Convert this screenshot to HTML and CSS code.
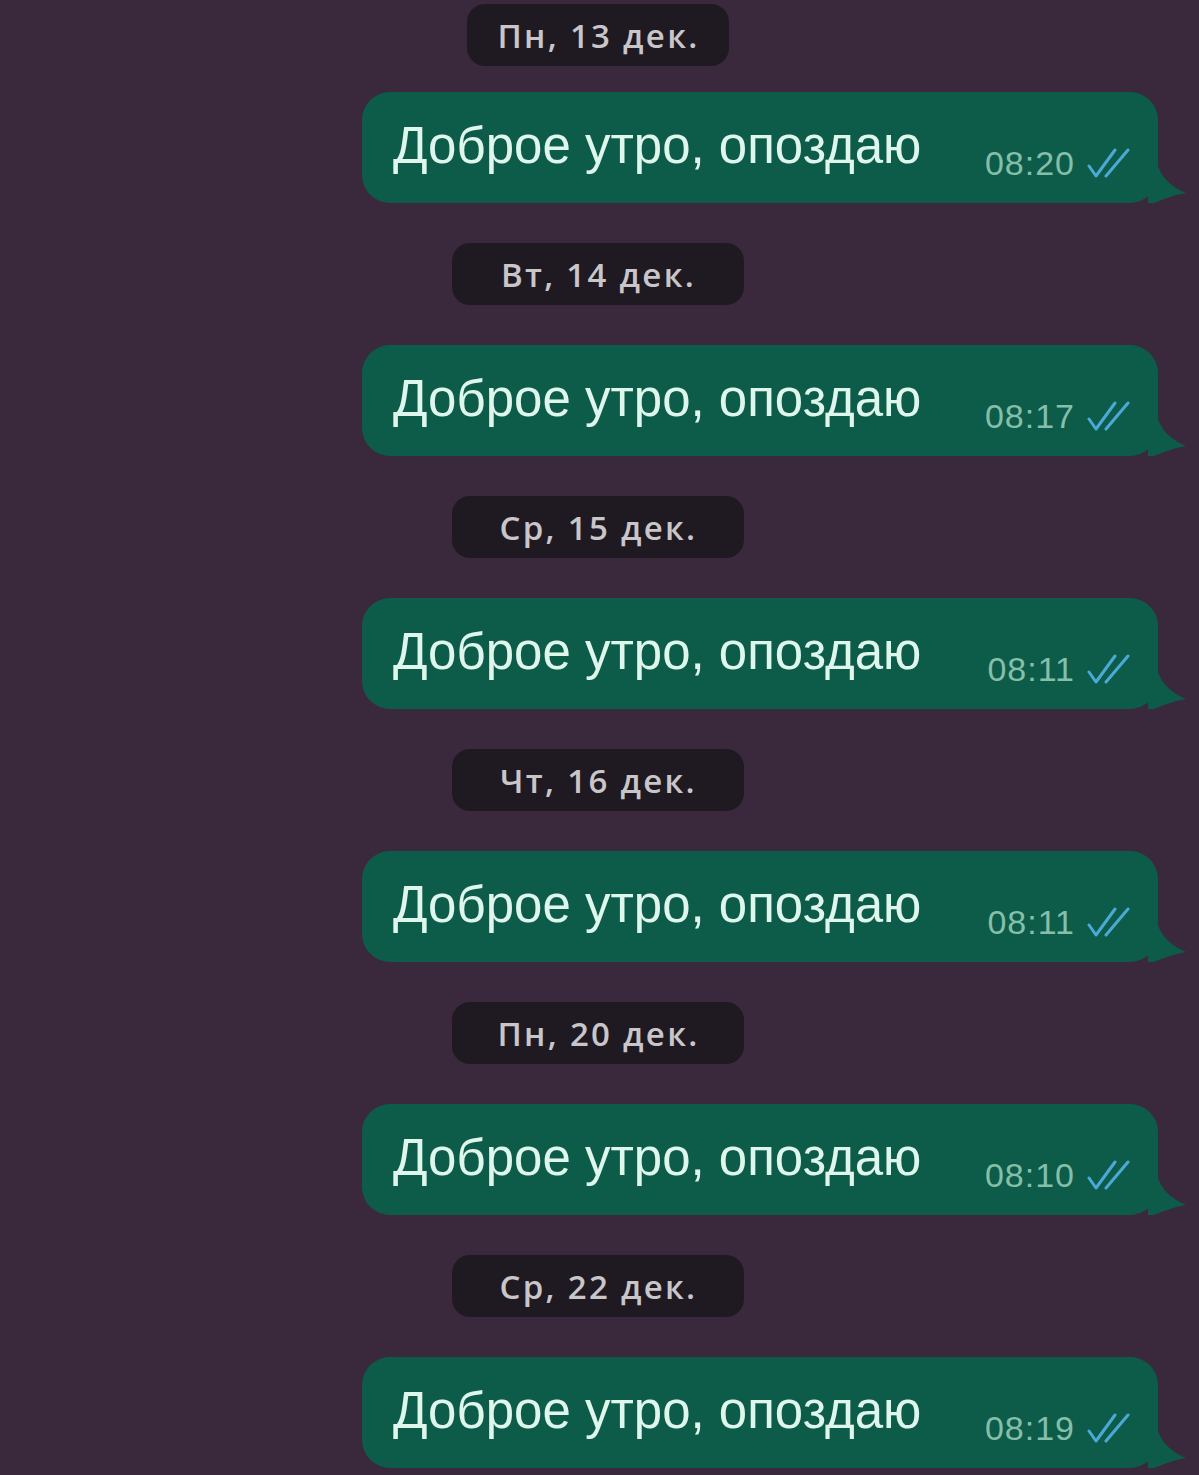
FILE: index.html
```html
<!DOCTYPE html>
<html lang="ru">
<head>
  <meta charset="UTF-8" />
  <meta name="viewport" content="width=device-width, initial-scale=1.0"/>
  <title>Чат</title>
  <link rel="stylesheet" href="styles.css">
</head>
<body>

  <div class="chat">

    <div class="date date--first">Пн, 13 дек.</div>
    <div class="bubble">
      <span class="text">Доброе утро, опоздаю</span>
      <span class="meta">
        <span class="time">08:20</span>
        <svg class="ticks" viewBox="0 0 44 31"><path d="M2 18 L9 28 L28 2 M19 28 L41 2"/></svg>
      </span>
      <svg class="tail" viewBox="0 0 40 70"><path d="M0 0 L6 0 C6 30 10 48 38 60 C26 62 16 66 6 70 L0 70 Z"/></svg>
    </div>

    <div class="date">Вт, 14 дек.</div>
    <div class="bubble">
      <span class="text">Доброе утро, опоздаю</span>
      <span class="meta">
        <span class="time">08:17</span>
        <svg class="ticks" viewBox="0 0 44 31"><path d="M2 18 L9 28 L28 2 M19 28 L41 2"/></svg>
      </span>
      <svg class="tail" viewBox="0 0 40 70"><path d="M0 0 L6 0 C6 30 10 48 38 60 C26 62 16 66 6 70 L0 70 Z"/></svg>
    </div>

    <div class="date">Ср, 15 дек.</div>
    <div class="bubble">
      <span class="text">Доброе утро, опоздаю</span>
      <span class="meta">
        <span class="time">08:11</span>
        <svg class="ticks" viewBox="0 0 44 31"><path d="M2 18 L9 28 L28 2 M19 28 L41 2"/></svg>
      </span>
      <svg class="tail" viewBox="0 0 40 70"><path d="M0 0 L6 0 C6 30 10 48 38 60 C26 62 16 66 6 70 L0 70 Z"/></svg>
    </div>

    <div class="date">Чт, 16 дек.</div>
    <div class="bubble">
      <span class="text">Доброе утро, опоздаю</span>
      <span class="meta">
        <span class="time">08:11</span>
        <svg class="ticks" viewBox="0 0 44 31"><path d="M2 18 L9 28 L28 2 M19 28 L41 2"/></svg>
      </span>
      <svg class="tail" viewBox="0 0 40 70"><path d="M0 0 L6 0 C6 30 10 48 38 60 C26 62 16 66 6 70 L0 70 Z"/></svg>
    </div>

    <div class="date">Пн, 20 дек.</div>
    <div class="bubble">
      <span class="text">Доброе утро, опоздаю</span>
      <span class="meta">
        <span class="time">08:10</span>
        <svg class="ticks" viewBox="0 0 44 31"><path d="M2 18 L9 28 L28 2 M19 28 L41 2"/></svg>
      </span>
      <svg class="tail" viewBox="0 0 40 70"><path d="M0 0 L6 0 C6 30 10 48 38 60 C26 62 16 66 6 70 L0 70 Z"/></svg>
    </div>

    <div class="date">Ср, 22 дек.</div>
    <div class="bubble">
      <span class="text">Доброе утро, опоздаю</span>
      <span class="meta">
        <span class="time">08:19</span>
        <svg class="ticks" viewBox="0 0 44 31"><path d="M2 18 L9 28 L28 2 M19 28 L41 2"/></svg>
      </span>
      <svg class="tail" viewBox="0 0 40 70"><path d="M0 0 L6 0 C6 30 10 48 38 60 C26 62 16 66 6 70 L0 70 Z"/></svg>
    </div>

  </div>

</body>
</html>
```

FILE: styles.css
```css
body {
  margin: 0;
  background: #3a293d;
  font-family: 'Liberation Sans', Arial, sans-serif;
  min-height: 1475px;
}

.chat {
  display: flex;
  flex-direction: column;
  align-items: center;
  padding-top: 4px;
}

.date {
  box-sizing: border-box;
  width: 292px;
  height: 62px;
  margin: 0 0 40px -4px;
  padding-left: 2px;
  background: #1f1a21;
  border-radius: 18px;
  color: #c9c6ca;
  font-family: 'Open Sans', 'Liberation Sans', sans-serif;
  font-size: 33px;
  font-weight: 600;
  letter-spacing: 2.3px;
  display: flex;
  align-items: center;
  justify-content: center;
}

.date--first {
  width: 262px;
  margin-bottom: 26px;
}

.bubble {
  position: relative;
  box-sizing: border-box;
  align-self: flex-end;
  width: 796px;
  height: 111px;
  margin: 0 41px 40px 0;
  padding: 0 27px 0 31px;
  background: #0d5c4a;
  border-radius: 28px;
  display: flex;
  align-items: center;
  justify-content: space-between;
}

.text {
  color: #dff6ec;
  font-size: 51px;
  margin-top: -4px;
}

.meta {
  display: flex;
  align-items: center;
  gap: 12px;
  margin-top: 32px;
}

.time {
  color: #86bfa9;
  font-size: 34px;
  letter-spacing: 1px;
}

.ticks {
  width: 44px;
  height: 31px;
  fill: none;
  stroke: #4ba9d6;
  stroke-width: 3;
  stroke-linecap: round;
  stroke-linejoin: round;
}

.tail {
  position: absolute;
  right: -30px;
  bottom: 0;
  width: 40px;
  height: 70px;
  fill: #0d5c4a;
}
```
